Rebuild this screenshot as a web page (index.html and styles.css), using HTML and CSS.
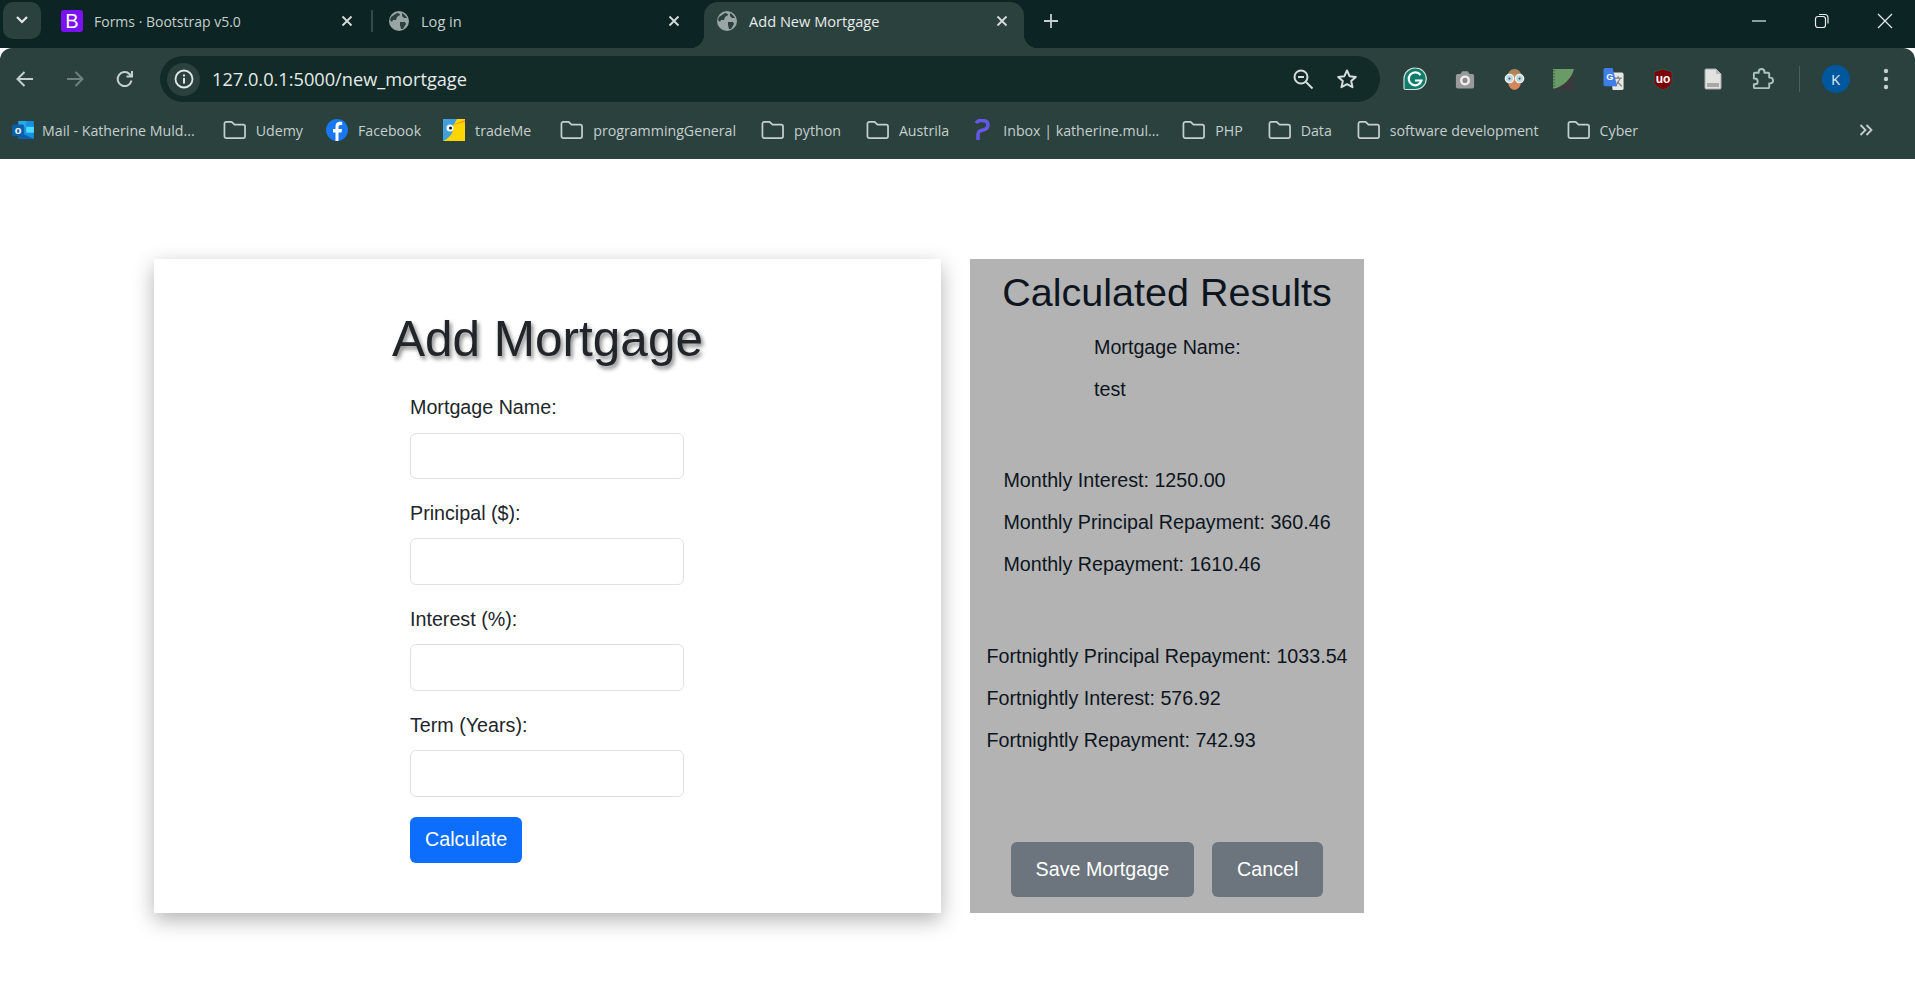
FILE: index.html
```html
<!DOCTYPE html>
<html lang="en">
<head>
    <meta charset="UTF-8">
    <title>Add New Mortgage</title>
    <link rel="stylesheet" href="styles.css">
</head>
<body>
    <svg class="defs" width="0" height="0">
        <symbol id="globe" viewBox="0 0 20 20">
            <circle cx="10" cy="10" r="10" fill="#9aa6a5"/>
            <path d="M2 6c2-1 4-3 6-4 2 0 3 1 3 2l-3 2-1 3-3 0-1 2-2-2zM11 11l5 0 1 2-3 5-2 0-1-4zM13 2c2 1 4 3 5 5l-3 0-2-2z" fill="#2b413e"/>
        </symbol>
        <symbol id="folder" viewBox="0 0 24 20">
            <path d="M1.5 3.5a2 2 0 0 1 2-2h5.5l3 3h9a2 2 0 0 1 2 2v10a2 2 0 0 1-2 2h-17.500a2 2 0 0 1-2-2z" fill="none" stroke="#c5cfcd" stroke-width="1.8"/>
        </symbol>
        <symbol id="close" viewBox="0 0 12 12">
            <path d="M1.500 1.500l9 9M10.500 1.500l-9 9" fill="none" stroke="currentColor" stroke-width="1.800"/>
        </symbol>
    </svg>

    <div class="tabstrip">
        <button class="tabsearch"><svg width="14" height="10" viewBox="0 0 14 10"><path d="M2 2l5 5 5-5" fill="none" stroke="#e3e8e7" stroke-width="2.200"/></svg></button>
        <div class="tab tab-first">
            <span class="bs-icon">B</span>
            <span class="tab-title">Forms · Bootstrap v5.0</span>
            <svg class="tab-close" width="12" height="12"><use href="#close"/></svg>
        </div>
        <span class="tab-sep"></span>
        <div class="tab tab-second">
            <svg class="fav" width="20" height="20"><use href="#globe"/></svg>
            <span class="tab-title">Log in</span>
            <svg class="tab-close" width="12" height="12"><use href="#close"/></svg>
        </div>
        <div class="tab tab-active">
            <svg class="fav" width="20" height="20"><use href="#globe"/></svg>
            <span class="tab-title">Add New Mortgage</span>
            <svg class="tab-close" width="12" height="12"><use href="#close"/></svg>
        </div>
        <svg class="newtab" width="16" height="16" viewBox="0 0 16 16"><path d="M8 1v14M1 8h14" stroke="#c5cfcd" stroke-width="1.800"/></svg>
        <div class="winctl">
            <svg width="16" height="16" viewBox="0 0 16 16"><path d="M1 8h14" stroke="#e8ecec" stroke-width="1.200"/></svg>
            <svg width="16" height="16" viewBox="0 0 16 16"><rect x="1.500" y="3.500" width="10" height="11" rx="2.500" fill="none" stroke="#e8ecec" stroke-width="1.200"/><path d="M5 1.500h6a3 3 0 0 1 3 3v6" fill="none" stroke="#e8ecec" stroke-width="1.200"/></svg>
            <svg width="16" height="16" viewBox="0 0 16 16"><path d="M1 1l14 14M15 1L1 15" stroke="#e8ecec" stroke-width="1.200"/></svg>
        </div>
    </div>

    <div class="toolbar">
        <div class="nav">
            <svg width="20" height="20" viewBox="0 0 20 20"><path d="M18 10H3M9.500 3L2.500 10l7 7" fill="none" stroke="#c5cfcd" stroke-width="2"/></svg>
            <svg width="20" height="20" viewBox="0 0 20 20"><path d="M2 10h15M10.500 3l7 7-7 7" fill="none" stroke="#6f807d" stroke-width="2"/></svg>
            <svg width="20" height="20" viewBox="0 0 20 20"><path d="M16.500 11.500a7 7 0 1 1-1.800-6.300L17 7.500M17 2v5.500h-5.500" fill="none" stroke="#c5cfcd" stroke-width="2"/></svg>
        </div>
        <div class="omnibox">
            <span class="site-info">
                <svg width="20" height="20" viewBox="0 0 20 20"><circle cx="10" cy="10" r="8.500" fill="none" stroke="#e3e8e7" stroke-width="1.800"/><path d="M10 9v5.500M10 5.500v2" stroke="#e3e8e7" stroke-width="2"/></svg>
            </span>
            <span class="url">127.0.0.1:5000/new_mortgage</span>
            <svg class="omni-zoom" width="22" height="22" viewBox="0 0 22 22"><circle cx="9" cy="9" r="6.500" fill="none" stroke="#d5dddb" stroke-width="2"/><path d="M6 9h6M14 14l6.500 6.500" stroke="#d5dddb" stroke-width="2"/></svg>
            <svg class="omni-star" width="22" height="22" viewBox="0 0 22 22"><path d="M11 2.500l2.600 5.700 6.200.7-4.600 4.200 1.300 6.100-5.500-3.100-5.500 3.100 1.300-6.100-4.600-4.200 6.200-.7z" fill="none" stroke="#d5dddb" stroke-width="2" stroke-linejoin="round"/></svg>
        </div>
        <div class="extensions">
            <svg width="24" height="24" viewBox="0 0 24 24"><path d="M12.500 1a10.500 10.500 0 0 1 0 21.500H2.500a1.500 1.500 0 0 1-1.500-1.500V12A11 11 0 0 1 12.500 1z" fill="#0f7c6c" stroke="#d5dddb" stroke-width="1.200"/><path d="M17.500 8a6.500 6.500 0 1 0 1 5.500H12" fill="none" stroke="#fff" stroke-width="2.200"/></svg>
            <svg width="20" height="19" viewBox="0 0 22 20"><path d="M1 6a2 2 0 0 1 2-2h3l2-3h6l2 3h3a2 2 0 0 1 2 2v12a2 2 0 0 1-2 2H3a2 2 0 0 1-2-2z" fill="#9a9a9a"/><circle cx="11" cy="11" r="5.500" fill="#eee"/><circle cx="11" cy="11" r="2.800" fill="#8a8a8a"/></svg>
            <svg width="21" height="22" viewBox="0 0 22 24"><path d="M3 12C3 5 6 1 11 1s8 4 8 11z" fill="#a9845c"/><ellipse cx="11" cy="15" rx="7" ry="9" fill="#d6885c"/><circle cx="5.500" cy="11.500" r="4.500" fill="#b9dbe2" stroke="#f2f2f2" stroke-width="1.500"/><circle cx="16.500" cy="11.500" r="4.500" fill="#b9dbe2" stroke="#f2f2f2" stroke-width="1.500"/><circle cx="5.500" cy="11.500" r="1.200" fill="#456"/><circle cx="16.500" cy="11.500" r="1.200" fill="#456"/></svg>
            <svg width="21" height="21" viewBox="0 0 21 21"><path d="M0 0h21v21H0z" fill="#3a3a3c"/><path d="M0 0h21C19 9 10 18 0 20z" fill="#6a9a66"/><path d="M1 1v19" stroke="#3d6b3d" stroke-width="1.500" stroke-dasharray="1.500 1.500"/></svg>
            <svg width="23" height="22" viewBox="0 0 22 24"><path d="M8 5h12a2 2 0 0 1 2 2v15a2 2 0 0 1-2 2H10z" fill="#e6e6e6"/><path d="M12 11h8M16 9v2M13 20l5-8M15 15l5 5" stroke="#777" stroke-width="1.200" fill="none"/><path d="M2 0h8l5 20H2a2 2 0 0 1-2-2V2a2 2 0 0 1 2-2z" fill="#3f7de8"/><text class="ext-g" x="3" y="13">G</text></svg>
            <svg width="20" height="23" viewBox="0 0 20 23"><path d="M10 1l9 3v9c0 4-4 7-9 9C5 20 1 17 1 13V4z" fill="#7b0505" stroke="#3d4a48" stroke-width="1"/><text class="ext-ub" x="10" y="15">uo</text></svg>
            <svg width="18" height="22" viewBox="0 0 18 22"><path d="M1 2a1 1 0 0 1 1-1h10l5 5v14a1 1 0 0 1-1 1H2a1 1 0 0 1-1-1z" fill="#e2e2e2" stroke="#a8a8a8" stroke-width="1"/><path d="M12 1l5 5h-5z" fill="#bdbdbd"/><rect x="3" y="15" width="12" height="4" fill="#a8a8a8"/></svg>
            <svg width="23" height="23" viewBox="0 0 24 24"><path d="M4 5h4V4a3 3 0 0 1 6 0v1h4a1 1 0 0 1 1 1v4h1a3 3 0 0 1 0 6h-1v4a1 1 0 0 1-1 1H4a1 1 0 0 1-1-1v-3h1a3 3 0 0 0 0-6H3V6a1 1 0 0 1 1-1z" fill="none" stroke="#a9c5bf" stroke-width="2" stroke-linejoin="round"/></svg>
        </div>
        <span class="tool-sep"></span>
        <span class="avatar">K</span>
        <svg class="kebab" width="6" height="22" viewBox="0 0 6 22"><circle cx="3" cy="3" r="2.200" fill="#c5cfcd"/><circle cx="3" cy="11" r="2.200" fill="#c5cfcd"/><circle cx="3" cy="19" r="2.200" fill="#c5cfcd"/></svg>
    </div>

    <div class="bookmarks">
        <a class="bm bm-mail">
            <svg width="22" height="20" viewBox="0 0 24 22"><rect x="7" y="1" width="17" height="20" rx="1.500" fill="#1490df"/><path d="M7 1h8.500v6.500H7z" fill="#28a8ea"/><path d="M15.500 7.500H24V14h-8.500z" fill="#50d9ff"/><path d="M7 13l17 8H8.500A1.500 1.500 0 0 1 7 19.500z" fill="#0a5fb0"/><rect x="0" y="5" width="13" height="13" rx="1.500" fill="#0b5ea8"/><text class="ext-o" x="6.500" y="15">o</text></svg>
            <span>Mail - Katherine Muld...</span>
        </a>
        <a class="bm bm-udemy"><svg class="fold" width="23" height="20"><use href="#folder"/></svg><span>Udemy</span></a>
        <a class="bm bm-fb">
            <svg width="22" height="22" viewBox="0 0 22 22"><circle cx="11" cy="11" r="11" fill="#1877f2"/><path d="M12.500 22v-8.500h3l.5-3.500h-3.500V8c0-1 .5-2 2-2h1.700V3c-3.700-.7-6.700.5-6.700 4.500V10H7v3.500h2.500V22z" fill="#fff"/></svg>
            <span>Facebook</span>
        </a>
        <a class="bm bm-tm">
            <svg width="22" height="22" viewBox="0 0 22 22"><rect width="22" height="22" fill="#ffd500"/><path d="M0 0h14L10 7C11 13 7 19 0 22z" fill="#3fa0dc"/><path d="M9 6l13-5v2z" fill="#f29a1f"/><circle cx="7" cy="9" r="3.500" fill="#fff"/><circle cx="7.500" cy="9" r="1.600" fill="#123"/></svg>
            <span>tradeMe</span>
        </a>
        <a class="bm bm-prog"><svg class="fold" width="23" height="20"><use href="#folder"/></svg><span>programmingGeneral</span></a>
        <a class="bm"><svg class="fold" width="23" height="20"><use href="#folder"/></svg><span>python</span></a>
        <a class="bm"><svg class="fold" width="23" height="20"><use href="#folder"/></svg><span>Austrila</span></a>
        <a class="bm bm-inbox">
            <svg width="16" height="22" viewBox="0 0 16 22"><path d="M2 4a6 6 0 0 1 6-2.500c4 0 6 2 6 4.500 0 3-2.500 4.500-5 5-3 .5-5 1.500-5 4.500V21" fill="none" stroke="#6558e8" stroke-width="3.500"/></svg>
            <span>Inbox | katherine.mul...</span>
        </a>
        <a class="bm bm-php"><svg class="fold" width="23" height="20"><use href="#folder"/></svg><span>PHP</span></a>
        <a class="bm"><svg class="fold" width="23" height="20"><use href="#folder"/></svg><span>Data</span></a>
        <a class="bm"><svg class="fold" width="23" height="20"><use href="#folder"/></svg><span>software development</span></a>
        <a class="bm bm-cyber"><svg class="fold" width="23" height="20"><use href="#folder"/></svg><span>Cyber</span></a>
        <svg class="more" width="14" height="12" viewBox="0 0 14 12"><path d="M1.500 1l5 5-5 5M7.500 1l5 5-5 5" fill="none" stroke="#c5cfcd" stroke-width="1.800"/></svg>
    </div>

    <main class="page">
        <section class="card">
            <h1>Add Mortgage</h1>
            <form class="mortgage-form">
                <label>Mortgage Name:</label>
                <input type="text" class="first-input">
                <label>Principal ($):</label>
                <input type="text">
                <label>Interest (%):</label>
                <input type="text">
                <label>Term (Years):</label>
                <input type="text">
                <button type="button" class="btn btn-primary">Calculate</button>
            </form>
        </section>
        <section class="results">
            <h2>Calculated Results</h2>
            <div class="group group-name">
                <p>Mortgage Name:</p>
                <p>test</p>
            </div>
            <div class="group group-monthly">
                <p>Monthly Interest: 1250.00</p>
                <p>Monthly Principal Repayment: 360.46</p>
                <p>Monthly Repayment: 1610.46</p>
            </div>
            <div class="group group-fortnight">
                <p>Fortnightly Principal Repayment: 1033.54</p>
                <p>Fortnightly Interest: 576.92</p>
                <p>Fortnightly Repayment: 742.93</p>
            </div>
            <div class="actions">
                <button type="button" class="btn btn-secondary">Save Mortgage</button>
                <button type="button" class="btn btn-secondary">Cancel</button>
            </div>
        </section>
    </main>
</body>
</html>
```

FILE: styles.css
```css
* {
    box-sizing: border-box;
}
html, body {
    margin: 0;
    padding: 0;
    height: 100%;
    overflow: hidden;
}
body {
    background-color: #fff;
    font-family: "Liberation Sans", Arial, sans-serif;
    color: #212529;
}
.defs {
    display: block;
    height: 0;
}

/* browser chrome */
.tabstrip {
    display: flex;
    align-items: center;
    height: 48px;
    background-color: #0c2423;
    font-family: "Open Sans", sans-serif;
    font-size: 14px;
    color: #c5cfcd;
}
.tabsearch {
    width: 38px;
    height: 37px;
    margin: -8px 0 0 3px;
    padding: 0;
    border: none;
    border-radius: 10px;
    background-color: #2b413e;
}
.tab {
    display: flex;
    align-items: center;
    height: 46px;
    margin-top: 2px;
    padding-bottom: 8px;
}
.tab-first {
    width: 331px;
    padding-left: 20px;
}
.tab-first .tab-close {
    margin-right: 19px;
}
.tab-second {
    width: 332px;
    padding-left: 17px;
    margin-left: -1px;
    font-size: 14.600px;
}
.tab-active {
    position: relative;
    width: 320px;
    padding-left: 13px;
    background-color: #2b413e;
    border-radius: 14px 14px 0 0;
    color: #e6ebea;
    font-size: 14.600px;
}
/* the little flares at the foot of the active tab */
.tab-active::before,
.tab-active::after {
    content: "";
    position: absolute;
    bottom: 0;
    width: 14px;
    height: 14px;
}
.tab-active::before {
    left: -14px;
    background: radial-gradient(circle at 0 0, transparent 14px, #2b413e 14.500px);
}
.tab-active::after {
    right: -14px;
    background: radial-gradient(circle at 100% 0, transparent 14px, #2b413e 14.500px);
}
.bs-icon {
    width: 22px;
    height: 22px;
    margin-right: 11px;
    border-radius: 3px;
    background-color: #7a12f5;
    color: #fff;
    font-family: "Liberation Sans", sans-serif;
    font-size: 20px;
    line-height: 22px;
    text-align: center;
}
.fav {
    margin-right: 12px;
}
.tab-title {
    flex: 1;
}
.tab-close {
    margin-right: 16px;
    color: #d5dddb;
}
.tab-sep {
    width: 2px;
    height: 22px;
    margin: -7px 0 0 -1px;
    background-color: #344a47;
}
.tab-second .tab-close {
    margin-right: 24px;
}
.newtab {
    margin: -7px 0 0 19px;
}
.winctl {
    display: flex;
    gap: 47px;
    margin: -7px 22px 0 auto;
}

.toolbar {
    display: flex;
    align-items: center;
    height: 55px;
    padding: 8px 0 1px;
    background-color: #2b413e;
    border-radius: 12px 12px 0 0;
}
.nav {
    display: flex;
    gap: 30px;
    padding-left: 15px;
}
.omnibox {
    display: flex;
    align-items: center;
    width: 1220px;
    height: 46px;
    margin-left: 25px;
    background-color: #122a28;
    border-radius: 23px;
    color: #e6ebea;
}
.site-info {
    display: flex;
    align-items: center;
    justify-content: center;
    width: 33px;
    height: 33px;
    margin-left: 7px;
    border-radius: 50%;
    background-color: #2b413e;
}
.url {
    flex: 1;
    margin-left: 12px;
    font-family: "Open Sans", sans-serif;
    font-size: 18.200px;
}
.omni-star {
    margin: 0 22px;
}
.extensions {
    display: grid;
    grid-template-columns: repeat(8, 49.700px);
    align-items: center;
    justify-items: center;
    margin-left: 10px;
}
.tool-sep {
    width: 1px;
    height: 26px;
    margin-left: 11px;
    background-color: #4a5f5c;
}
.avatar {
    width: 28px;
    height: 28px;
    margin-left: 22px;
    border-radius: 50%;
    background-color: #00579e;
    color: #dfe8ee;
    font-family: "Open Sans", sans-serif;
    font-size: 15px;
    line-height: 28px;
    text-align: center;
}
.kebab {
    margin-left: 33px;
}

.bookmarks {
    display: flex;
    align-items: center;
    gap: 25px;
    height: 56px;
    padding: 0 0 2px 12px;
    background-color: #2b413e;
    font-family: "Open Sans", sans-serif;
    font-size: 14.200px;
    color: #c5cfcd;
}
.bm {
    display: flex;
    align-items: center;
    gap: 10px;
    white-space: nowrap;
}
.bm-mail {
    gap: 8px;
}
.bm-udemy {
    margin-left: 3px;
}
.bm-fb {
    margin-left: -2px;
}
.bm-tm {
    margin-left: -3px;
}
.bm-prog {
    margin-left: 4px;
}
.bm-inbox {
    gap: 13px;
}
.bm-php {
    margin-left: -2px;
}
.bm-cyber {
    margin-left: 3px;
}
.more {
    margin-left: auto;
    margin-right: 42px;
}
.ext-g {
    font: bold 10px "Liberation Sans", sans-serif;
    fill: #fff;
}
.ext-ub {
    font: bold 12px "Liberation Sans", sans-serif;
    fill: #fff;
    text-anchor: middle;
}
.ext-o {
    font: bold 12px "Liberation Sans", sans-serif;
    fill: #fff;
    text-anchor: middle;
}

/* page */
.page {
    display: flex;
    align-items: stretch;
    gap: 29px;
    padding: 100px 0 0 154px;
}
.card {
    width: 787px;
    height: 654px;
    background-color: #fff;
    box-shadow: 0 7px 20px rgba(0, 0, 0, .3);
    padding-top: 50px;
}
h1 {
    margin: 0 0 23px;
    font-size: 49.500px;
    font-weight: 400;
    line-height: 60px;
    text-align: center;
    text-shadow: 2px 3px 4px rgba(0, 0, 0, .5);
}
.mortgage-form {
    display: flex;
    flex-direction: column;
    align-items: flex-start;
    width: 274px;
    margin-left: 256px;
    font-size: 19.700px;
}
label {
    line-height: 30px;
    margin-bottom: 10px;
}
input {
    width: 100%;
    height: 47px;
    margin-bottom: 19px;
    border: 1px solid #dee2e6;
    border-radius: 6px;
    background-color: #fff;
}
.first-input {
    height: 46px;
    margin-top: 1px;
}
.btn {
    border: none;
    color: #fff;
    font-family: "Liberation Sans", Arial, sans-serif;
    font-size: 19.700px;
    line-height: 30px;
}
.btn-primary {
    margin-top: 1px;
    height: 46px;
    padding: 0 15px 2px;
    border-radius: 6px;
    background-color: #0d6efd;
}
.btn-secondary {
    height: 55px;
    padding: 0 25px 2px;
    border-radius: 6px;
    background-color: #6c757d;
}

.results {
    display: flex;
    flex-direction: column;
    align-items: center;
    width: 394px;
    height: 654px;
    background-color: #b3b3b3;
    color: #0d1520;
    font-size: 19.700px;
}
h2 {
    margin: 9px 0 0;
    font-size: 39.500px;
    font-weight: 400;
    line-height: 48px;
    text-align: center;
}
.group p {
    margin: 0 0 12px;
    line-height: 30px;
}
.group-name {
    width: 146px;
    margin-top: 16px;
    white-space: nowrap;
}
.group-monthly {
    margin-top: 49px;
}
.group-fortnight {
    margin-top: 50px;
}
.actions {
    display: flex;
    gap: 18px;
    margin-top: auto;
    margin-bottom: 16px;
}
```
